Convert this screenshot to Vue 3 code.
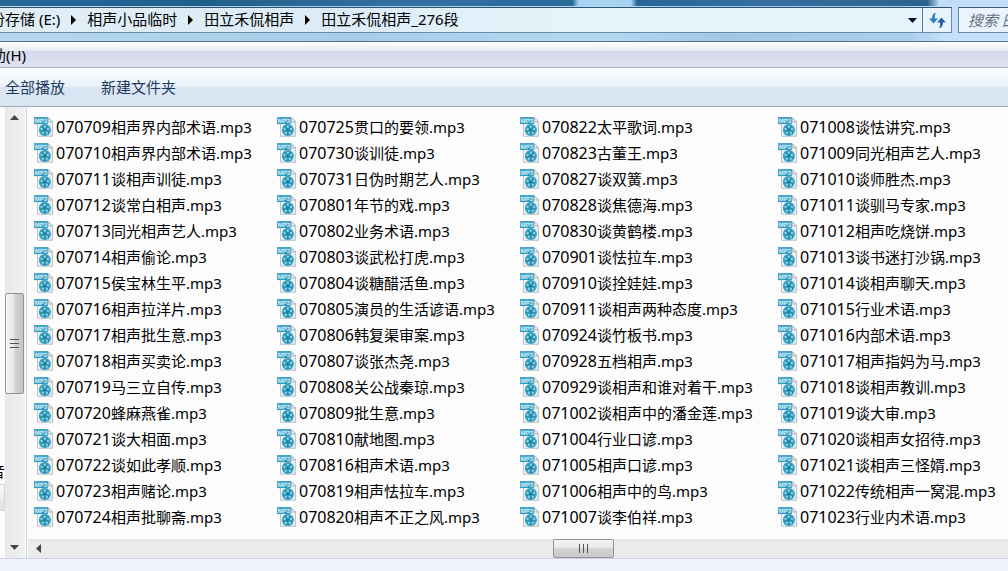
<script setup>
const crumbs = ['份存储 (E:)', '相声小品临时', '田立禾侃相声', '田立禾侃相声_276段']

const parse = (list) =>
  list.split(' ').map((name) => ({ code: name.slice(0, 6), title: name.slice(6) + '.mp3' }))

const columns = [
  '070709相声界内部术语 070710相声界内部术语 070711谈相声训徒 070712谈常白相声 070713同光相声艺人 070714相声偷论 070715侯宝林生平 070716相声拉洋片 070717相声批生意 070718相声买卖论 070719马三立自传 070720蜂麻燕雀 070721谈大相面 070722谈如此孝顺 070723相声赌论 070724相声批聊斋',
  '070725贯口的要领 070730谈训徒 070731日伪时期艺人 070801年节的戏 070802业务术语 070803谈武松打虎 070804谈糖醋活鱼 070805演员的生活谚语 070806韩复渠审案 070807谈张杰尧 070808关公战秦琼 070809批生意 070810献地图 070816相声术语 070819相声怯拉车 070820相声不正之风',
  '070822太平歌词 070823古董王 070827谈双簧 070828谈焦德海 070830谈黄鹤楼 070901谈怯拉车 070910谈拴娃娃 070911谈相声两种态度 070924谈竹板书 070928五档相声 070929谈相声和谁对着干 071002谈相声中的潘金莲 071004行业口谚 071005相声口谚 071006相声中的鸟 071007谈李伯祥',
  '071008谈怯讲究 071009同光相声艺人 071010谈师胜杰 071011谈驯马专家 071012相声吃烧饼 071013谈书迷打沙锅 071014谈相声聊天 071015行业术语 071016内部术语 071017相声指妈为马 071018谈相声教训 071019谈大审 071020谈相声女招待 071021谈相声三怪婿 071022传统相声一窝混 071023行业内术语',
].map(parse)
</script>

<template>
  <div class="explorer">
    <svg class="sprite" aria-hidden="true">
      <defs>
        <linearGradient id="page-fill" x1="0" y1="0" x2="1" y2="1">
          <stop offset="0" stop-color="#ffffff" />
          <stop offset="1" stop-color="#dfe6ec" />
        </linearGradient>
        <linearGradient id="tag-fill" x1="0" y1="0" x2="0" y2="1">
          <stop offset="0" stop-color="#4fb2d3" />
          <stop offset="1" stop-color="#1c8db5" />
        </linearGradient>
        <symbol id="mp3" viewBox="0 0 20 20">
          <path d="M3.5 .7H14.3L18.6 5V19.3H3.5Z" fill="url(#page-fill)" stroke="#b3bdc6" stroke-width=".9" />
          <path d="M14.3 .7V5H18.6Z" fill="#e8edf1" stroke="#9eabb6" stroke-width=".8" />
          <circle cx="10.8" cy="13" r="6" fill="#2391b3" />
          <circle cx="10.8" cy="13" r="5.3" fill="none" stroke="#5db9d2" stroke-width=".6" />
          <g fill="#8fd0e1">
            <circle cx="10.8" cy="9.7" r="1.2" />
            <circle cx="14" cy="12" r="1.2" />
            <circle cx="12.8" cy="15.8" r="1.2" />
            <circle cx="8.8" cy="15.8" r="1.2" />
            <circle cx="7.6" cy="12" r="1.2" />
          </g>
          <circle cx="10.8" cy="13" r=".8" fill="#0d6485" />
          <rect x=".5" y=".4" width="13" height="6.400" fill="url(#tag-fill)" stroke="#2391b8" stroke-width=".6" />
          <text x="7" y="5.700" text-anchor="middle" class="tag">MP3</text>
        </symbol>
      </defs>
    </svg>

    <header class="glass">
      <div class="address">
        <nav class="crumbs" aria-label="地址">
          <template v-for="(crumb, i) in crumbs" :key="crumb">
            <svg v-if="i" class="arrow" viewBox="0 0 5 10"><path d="M0 0L5 5L0 10Z" /></svg>
            <a href="#">{{ crumb }}</a>
          </template>
        </nav>
        <button class="drop" aria-label="以前的位置">
          <svg width="9" height="5" viewBox="0 0 9 5"><path d="M0 0H9L4.5 5Z" fill="#000c33" /></svg>
        </button>
        <button class="refresh" aria-label="刷新">
          <svg width="17" height="15" viewBox="0 0 17 15">
            <path d="M6 0C3.800 .8 3 2.500 3 5.500H0L4.500 10.500L9 5.500H6C5.700 3 5.800 1.600 7 .3Z" fill="#2f7fca" />
            <path d="M11 15C13.200 14.200 14 12.500 14 9.500H17L12.500 4.500L8 9.500H11C11.300 12 11.200 13.400 10 14.700Z" fill="#2862ad" />
          </svg>
        </button>
      </div>
      <input class="search" type="text" placeholder="搜索 田立禾侃相声_276段" aria-label="搜索" />
    </header>

    <nav class="menubar" aria-label="菜单"><button>帮助(H)</button></nav>

    <div class="toolbar">
      <button>全部播放</button>
      <button>新建文件夹</button>
    </div>

    <main class="body">
      <aside class="tree">
        <span class="tree-label">音</span>
        <span class="tree-item"></span>
      </aside>
      <div class="vscroll">
        <button aria-label="向上滚动"><svg width="9" height="5" viewBox="0 0 9 5"><path d="M0 5H9L4.500 0Z" /></svg></button>
        <div class="before"></div>
        <div class="thumb"><i></i><i></i><i></i></div>
        <div class="after"></div>
        <button aria-label="向下滚动"><svg width="9" height="5" viewBox="0 0 9 5"><path d="M0 0H9L4.500 5Z" /></svg></button>
      </div>
      <div class="splitter"></div>
      <section class="content">
        <div class="files">
          <ul v-for="(column, c) in columns" :key="c">
            <li v-for="file in column" :key="file.code">
              <svg class="icon"><use href="#mp3" /></svg>
              <span><span class="code">{{ file.code }}</span>{{ file.title }}</span>
            </li>
          </ul>
        </div>
        <div class="hscroll">
          <button aria-label="向左滚动"><svg width="5" height="9" viewBox="0 0 5 9"><path d="M5 0V9L0 4.500Z" /></svg></button>
          <div class="before"></div>
          <div class="thumb"><i></i><i></i><i></i></div>
          <div class="after"></div>
        </div>
      </section>
    </main>
    <footer class="status"></footer>
  </div>
</template>

<style>
body {
  background: #eff3fc;
}
</style>

<style scoped>
.explorer {
  overflow: hidden;
  color: #000;
  font: 15px/26px "Noto Sans", "Noto Sans CJK SC", sans-serif;
}
.explorer * {
  box-sizing: border-box;
}
.sprite {
  position: absolute;
  width: 0;
  height: 0;
}
.tag {
  font: bold 6px "Liberation Sans", sans-serif;
  fill: #d8f0f8;
}
button {
  display: flex;
  align-items: center;
  justify-content: center;
  padding: 0;
  border: 0;
  background: none;
  color: inherit;
  font: inherit;
  white-space: nowrap;
}
.glass {
  display: flex;
  gap: 6px;
  height: 42px;
  padding-top: 7px;
  border-bottom: 1px solid #50738f;
  background:
    linear-gradient(90deg, #2a6797 0, #235f8d 20%, #34709f 40%, #2c6a9a 56.8%, #a9d2f3 57.4%, #a9d2f3 62.6%, #2a6695 63.2%, #3570a0 76%, #286390 92%, #c0ddf7 93.2%) top / 100% 6px no-repeat,
    linear-gradient(90deg, #b5d8ef 0, #a5cdea 35%, #b3d8f3 60%, #9fc8e8 72%, #a8cfee 90%, #c5e0fa 94%);
}
.address {
  display: flex;
  flex: 1;
  min-width: 0;
  height: 26px;
  border: 1px solid #6d8ba3;
  border-top-color: #2f536e;
  border-left: 0;
  background: linear-gradient(90deg, #e1eef7, #dcebf6 35%, #e4f2fa 55%, #e7f4fb);
}
.crumbs {
  display: flex;
  flex: 1;
  align-items: center;
  gap: 11px;
  min-width: 0;
  margin-left: -10px;
  overflow: hidden;
  line-height: 24px;
  white-space: nowrap;
}
.crumbs a {
  padding-bottom: 2px;
  color: #000;
  text-decoration: none;
}
.arrow {
  flex: none;
  width: 5px;
  height: 10px;
}
.drop {
  width: 19px;
}
.refresh {
  width: 29px;
  border-left: 1px solid #54748d;
}
.search {
  flex: 0 0 50px;
  min-width: 0;
  width: 50px;
  height: 26px;
  padding: 0 0 0 9px;
  border: 1px solid #6d8ba3;
  border-top-color: #3d5d77;
  border-right: 0;
  border-radius: 0;
  background: #eaf4fe;
  font: italic 15px/24px "Noto Sans", "Noto Sans CJK SC", sans-serif;
}
.search::placeholder {
  color: #68727c;
  opacity: 1;
}
.menubar {
  display: flex;
  height: 26px;
  border-bottom: 1px solid #a9b4c8;
  background: linear-gradient(#fff 0, #e8eaf3 35%, #d5d9ec 38%, #dfe3f2);
}
.menubar button {
  margin-left: -24px;
}
.toolbar {
  display: flex;
  gap: 36px;
  height: 39px;
  padding-left: 5px;
  border-bottom: 1px solid #9ba9be;
  background: linear-gradient(#fdfeff 0, #e8f3fc 48%, #dbe6f5 50%, #dae5f4);
  color: #1e395b;
}
.body {
  display: flex;
  background: #fcfcfc;
}
.tree {
  display: flex;
  flex-direction: column;
  justify-content: flex-end;
  width: 5px;
  padding-bottom: 47px;
  overflow: hidden;
}
.tree-label {
  margin-left: -10px;
}
.tree-item {
  height: 27px;
  border: 1px solid #d5d5d5;
  border-left: 0;
  background: linear-gradient(#f9f9f9, #e2e2e2);
}
.vscroll {
  display: flex;
  flex-direction: column;
  width: 19px;
  background: linear-gradient(90deg, #e8e8e8, #f1f1f1);
}
.vscroll button {
  flex: 0 0 21px;
}
.vscroll path,
.hscroll path {
  fill: #444;
}
.vscroll .before {
  flex: 165;
}
.vscroll .after {
  flex: 143;
}
.thumb {
  display: flex;
  align-items: center;
  justify-content: center;
  gap: 3px;
  border: 1px solid #939393;
  border-radius: 2px;
}
.vscroll .thumb {
  flex: 0 0 101px;
  flex-direction: column;
  background: linear-gradient(90deg, #f6f6f6, #e6e6e6 48%, #d2d2d2 52%, #c6c6c6);
}
.vscroll i {
  width: 9px;
  height: 1px;
  background: #555;
}
.splitter {
  width: 4px;
  border-right: 1px solid #fff;
  background: linear-gradient(90deg, #f6f6f6 2px, #cfd6e0 2px, #cfd6e0 3px, #fff 3px);
}
.content {
  flex: 1;
  min-width: 0;
}
.files {
  display: grid;
  grid-template-columns: 243px 243px 258px 1fr;
  padding: 7px 0 9px 6px;
}
ul {
  margin: 0;
  padding: 0;
  list-style: none;
}
li {
  display: flex;
  align-items: center;
  gap: 2px;
  height: 26px;
  white-space: nowrap;
}
.icon {
  flex: none;
  width: 20px;
  height: 20px;
}
.code {
  font-size: 16px;
}
.hscroll {
  display: flex;
  height: 19px;
  background: linear-gradient(#e3e3e3, #ececec 4px, #ebebeb);
}
.hscroll button {
  flex: 0 0 21px;
}
.hscroll .before {
  flex: 504;
}
.hscroll .thumb {
  flex: 0 0 61px;
  background: linear-gradient(#f6f6f6, #e6e6e6 48%, #d2d2d2 52%, #cacaca);
}
.hscroll .after {
  flex: 394;
}
.hscroll i {
  width: 1px;
  height: 9px;
  background: #555;
}
.status {
  height: 13px;
  border-top: 1px solid #c9d2e0;
  background: #eff3fc;
}
</style>
